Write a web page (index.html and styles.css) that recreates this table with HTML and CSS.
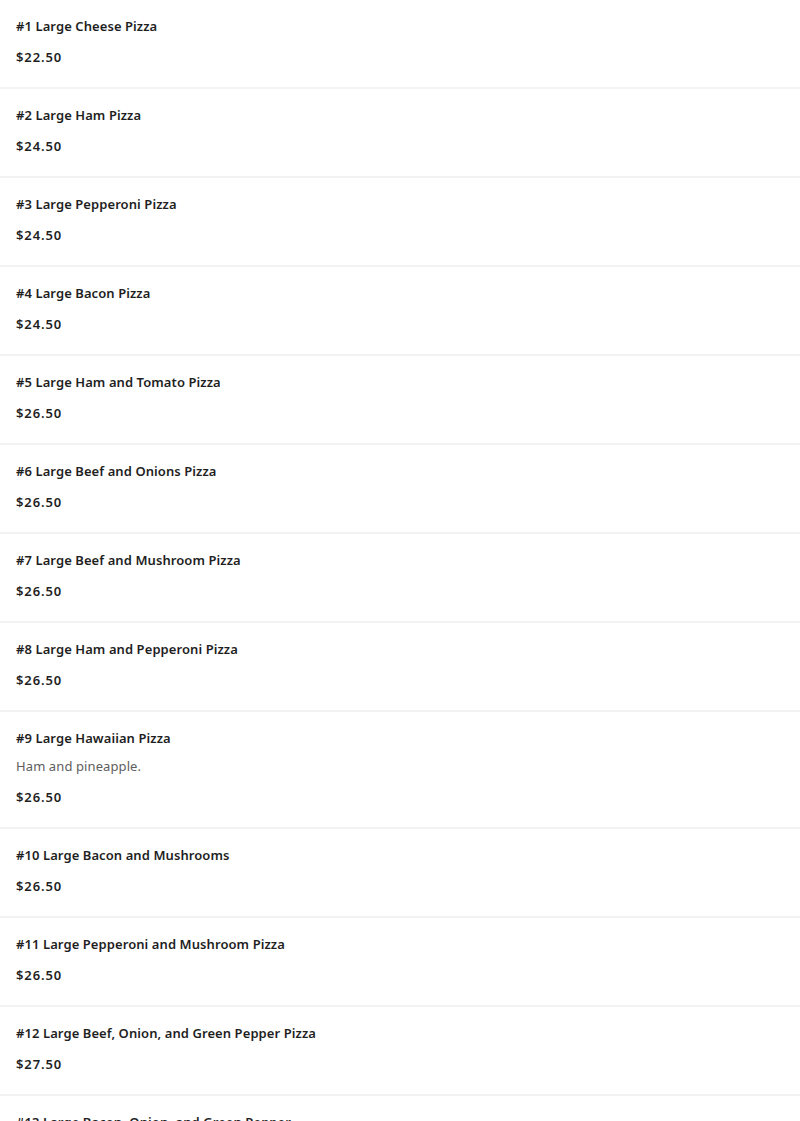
FILE: index.html
```html
<!DOCTYPE html>
<html>
<head>
<meta charset="utf-8">
<link rel="stylesheet" href="styles.css">
</head>
<body>
<ul class="menu">
  <li class="item"><div class="title">#1 Large Cheese Pizza</div><div class="price">$22.50</div></li>
  <li class="item"><div class="title">#2 Large Ham Pizza</div><div class="price">$24.50</div></li>
  <li class="item"><div class="title">#3 Large Pepperoni Pizza</div><div class="price">$24.50</div></li>
  <li class="item"><div class="title">#4 Large Bacon Pizza</div><div class="price">$24.50</div></li>
  <li class="item"><div class="title">#5 Large Ham and Tomato Pizza</div><div class="price">$26.50</div></li>
  <li class="item"><div class="title">#6 Large Beef and Onions Pizza</div><div class="price">$26.50</div></li>
  <li class="item"><div class="title">#7 Large Beef and Mushroom Pizza</div><div class="price">$26.50</div></li>
  <li class="item"><div class="title">#8 Large Ham and Pepperoni Pizza</div><div class="price">$26.50</div></li>
  <li class="item"><div class="title">#9 Large Hawaiian Pizza</div><div class="desc">Ham and pineapple.</div><div class="price">$26.50</div></li>
  <li class="item"><div class="title">#10 Large Bacon and Mushrooms</div><div class="price">$26.50</div></li>
  <li class="item"><div class="title">#11 Large Pepperoni and Mushroom Pizza</div><div class="price">$26.50</div></li>
  <li class="item"><div class="title">#12 Large Beef, Onion, and Green Pepper Pizza</div><div class="price">$27.50</div></li>
  <li class="item"><div class="title">#13 Large Bacon, Onion, and Green Pepper</div><div class="price">$27.50</div></li>
</ul>
</body>
</html>
```
FILE: styles.css
```css
html, body {
  margin: 0;
  padding: 0;
  background: #ffffff;
}
body {
  font-family: "Noto Sans", "Open Sans", sans-serif;
  color: #1f1f1f;
}
.menu {
  list-style: none;
  margin: 0;
  padding: 0;
}
.item {
  display: flex;
  flex-direction: column;
  padding: 16px 16px 20px;
  border-bottom: 2px solid #f3f3f3;
}
.title {
  font-size: 13px;
  font-weight: 600;
  line-height: 20px;
  letter-spacing: 0.08px;
  margin-bottom: 11px;
}
.desc {
  font-size: 13px;
  font-weight: 400;
  line-height: 18px;
  letter-spacing: 0.1px;
  color: #5e5e5e;
  margin-top: -2px;
  margin-bottom: 12px;
}
.price {
  font-size: 13px;
  font-weight: 600;
  line-height: 20px;
  letter-spacing: 0.9px;
}
```
